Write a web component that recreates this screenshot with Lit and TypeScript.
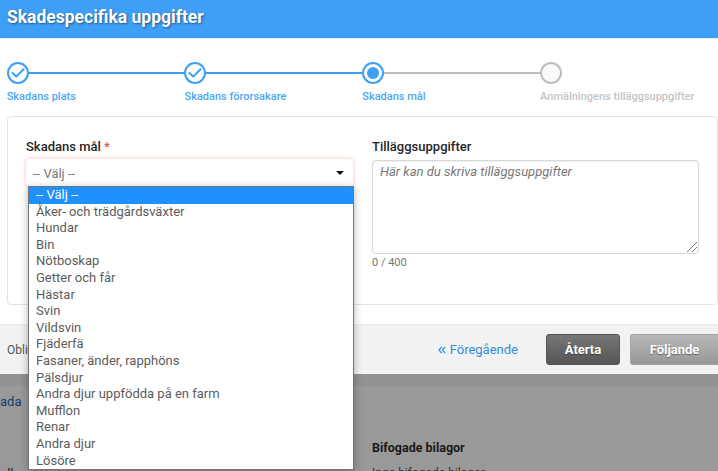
import { LitElement, html, css } from "lit";
import { customElement } from "lit/decorators.js";

const OPTIONS = [
  "-- Välj --", "Åker- och trädgårdsväxter", "Hundar", "Bin", "Nötboskap", "Getter och får",
  "Hästar", "Svin", "Vildsvin", "Fjäderfä", "Fasaner, änder, rapphöns", "Pälsdjur",
  "Andra djur uppfödda på en farm", "Mufflon", "Renar", "Andra djur", "Lösöre",
];

const STEPS = [
  { label: "Skadans plats", state: "done" },
  { label: "Skadans förorsakare", state: "done" },
  { label: "Skadans mål", state: "current" },
  { label: "Anmälningens tilläggsuppgifter", state: "todo" },
];

@customElement("app-root")
export class AppRoot extends LitElement {
  static styles = css`
    :host {
      display: block;
      width: 718px;
      height: 471px;
      overflow: hidden;
      position: relative;
      font-family: Roboto, "Liberation Sans", sans-serif;
      background: #fff;
      color: #222;
    }
    .header {
      height: 38px;
      background: #3d9ff5;
      display: flex;
      align-items: center;
      padding: 0 7px 4px;
      box-sizing: border-box;
      color: #fff;
      font-size: 17.5px;
      font-weight: 700;
      text-shadow: 1px 1px 2px rgba(0, 0, 0, 0.45);
    }
    .body { height: 286px; box-sizing: border-box; padding: 24px 0 0 6.7px; border-top: 1px solid #f0f0f0; }
    .steps { display: grid; grid-template-columns: 177.8px 177.8px 177.8px 170px; height: 54px; margin-top: -1px; }
    .step { display: flex; flex-direction: column; min-width: 0; }
    .track { display: flex; align-items: center; height: 22px; }
    .dot {
      width: 22px; height: 22px; box-sizing: border-box; border-radius: 50%;
      border: 2px solid #3d9ff5; flex: none; display: flex; align-items: center; justify-content: center;
      background: #fff;
    }
    .dot.todo { border-color: #bdbdbd; background: #fafafa; }
    .dot .inner { width: 12px; height: 12px; border-radius: 50%; background: #3d9ff5; }
    .line { flex: 1; height: 2px; background: #3d9ff5; }
    .line.todo { background: #bdbdbd; }
    .step-label { font-size: 11px; font-weight: 500; color: #4da7f5; margin-top: 6px; white-space: nowrap; line-height: 13px; }
    .step-label.todo { color: #c4c4c4; }
    .card {
      width: 711px; height: 189px; box-sizing: border-box;
      border: 1px solid #e4e4e4; border-radius: 4px;
      padding: 22px 19px 0 18.3px;
      display: grid; grid-template-columns: 327px 327px; column-gap: 19px;
    }
    .label { font-size: 13px; font-weight: 500; line-height: 16px; color: #262626; }
    .req { color: #d9534f; }
    .field { position: relative; }
    .select {
      margin-top: 4px; height: 28px; box-sizing: border-box;
      border-radius: 4px; background: #fff;
      box-shadow: 0 0 4px rgba(230, 60, 50, 0.35);
      display: flex; align-items: center; justify-content: space-between;
      padding: 0 9px 0 7px; font-size: 13px; color: #777;
    }
    .arrow { width: 0; height: 0; border-left: 4px solid transparent; border-right: 4px solid transparent; border-top: 4px solid #111; }
    .textarea {
      margin-top: 5px; height: 94px; box-sizing: border-box; position: relative;
      border: 1px solid #d8d8d8; border-radius: 4px; padding: 4px 7px;
      font-size: 13px; font-style: italic; color: #777; line-height: 14px;
      box-shadow: inset 0 1px 1px rgba(0, 0, 0, 0.06);
    }
    .grip { position: absolute; right: 0; bottom: 0; }
    .count { font-size: 11px; color: #777; margin-top: 2px; line-height: 14px; }
    .footer {
      height: 50px; background: #f2f2f2; border-top: 1px solid #ececec; box-sizing: border-box;
      display: flex; align-items: center; padding: 0 0 0 7px; font-size: 12px; color: #555;
    }
    .obli { flex: 1; }
    .prev { color: #2f8fe0; font-size: 13px; margin-right: 28px; display: flex; gap: 4px; align-items: center; }
    .btn {
      height: 31px; box-sizing: border-box; border-radius: 3px; color: #fff; font-size: 13px; font-weight: 700;
      display: flex; align-items: center; justify-content: center; text-shadow: 0 1px 1px rgba(0, 0, 0, 0.4);
    }
    .reset { width: 74px; background: linear-gradient(#767676, #565656); border: 1px solid #555; margin-right: 10px; }
    .next { width: 88px; background: linear-gradient(#b8b8b8, #989898); border: 1px solid #a4a4a4; border-right: none; border-radius: 3px 0 0 3px; }
    .dim { background: #999; height: 97px; box-shadow: inset 0 12px 0 #929292; display: grid; grid-template-columns: 372px 1fr; font-size: 13px; }
    .dim-left { padding-top: 20px; color: #17406e; line-height: 16px; display: flex; flex-direction: column; gap: 56px; }
    .dim-left .blk { color: #222; }
    .dim-right { padding-top: 66px; color: #1a1a1a; }
    .dim-title { font-size: 12.5px; font-weight: 700; line-height: 16px; }
    .dim-sub { font-size: 12px; line-height: 14px; margin-top: 10px; color: #333; }
    .menu {
      position: absolute; left: 28px; top: 186px; width: 326px; height: 284px; box-sizing: border-box;
      background: #fff; border: 1px solid #767676; box-shadow: 0 2px 8px rgba(0, 0, 0, 0.3);
      font-size: 13px; color: #5c5c5c; overflow: hidden;
    }
    .opt { height: 16.6px; line-height: 16.6px; padding-left: 7px; white-space: nowrap; }
    .opt.sel { background: #1e90ff; color: #fff; }
  `;

  private renderDot(state: string) {
    if (state === "done") {
      return html`<div class="dot">
        <svg width="14" height="12" viewBox="0 0 14 12" fill="none">
          <path d="M1.5 6 L5.2 9.6 L12.5 2.2" stroke="#3d9ff5" stroke-width="2" stroke-linecap="round" stroke-linejoin="round"></path>
        </svg>
      </div>`;
    }
    if (state === "current") {
      return html`<div class="dot"><div class="inner"></div></div>`;
    }
    return html`<div class="dot todo"></div>`;
  }

  render() {
    return html`
      <div class="header">Skadespecifika uppgifter</div>
      <div class="body">
        <div class="steps">
          ${STEPS.map(
            (s, i) => html`<div class="step">
              <div class="track">
                ${this.renderDot(s.state)}
                ${i < 3 ? html`<div class="line ${s.state === "current" ? "todo" : ""}"></div>` : ""}
              </div>
              <div class="step-label ${s.state === "todo" ? "todo" : ""}">${s.label}</div>
            </div>`
          )}
        </div>
        <div class="card">
          <div class="field">
            <div class="label">Skadans mål <span class="req">*</span></div>
            <div class="select"><span>-- Välj --</span><span class="arrow"></span></div>
          </div>
          <div class="field">
            <div class="label">Tilläggsuppgifter</div>
            <div class="textarea">
              Här kan du skriva tilläggsuppgifter
              <svg class="grip" width="12" height="12" viewBox="0 0 12 12" fill="none">
                <path d="M1 11 L11 1 M6 11 L11 6" stroke="#777" stroke-width="1"></path>
              </svg>
            </div>
            <div class="count">0 / 400</div>
          </div>
        </div>
      </div>
      <div class="footer">
        <span class="obli">Obligatoriska fält</span>
        <span class="prev">
          <svg width="8" height="8" viewBox="0 0 8 8" fill="none">
            <path d="M3.6 1 L1 4 L3.6 7 M7 1 L4.4 4 L7 7" stroke="#2f8fe0" stroke-width="1.2"></path>
          </svg>
          Föregående
        </span>
        <span class="btn reset">Återta</span>
        <span class="btn next">Följande</span>
      </div>
      <div class="dim">
        <div class="dim-left">
          <span>ada</span>
          <span class="blk">ulla</span>
        </div>
        <div class="dim-right">
          <div class="dim-title">Bifogade bilagor</div>
          <div class="dim-sub">Inga bifogade bilagor</div>
        </div>
      </div>
      <div class="menu">
        ${OPTIONS.map((o, i) => html`<div class="opt ${i === 0 ? "sel" : ""}">${o}</div>`)}
      </div>
    `;
  }
}
